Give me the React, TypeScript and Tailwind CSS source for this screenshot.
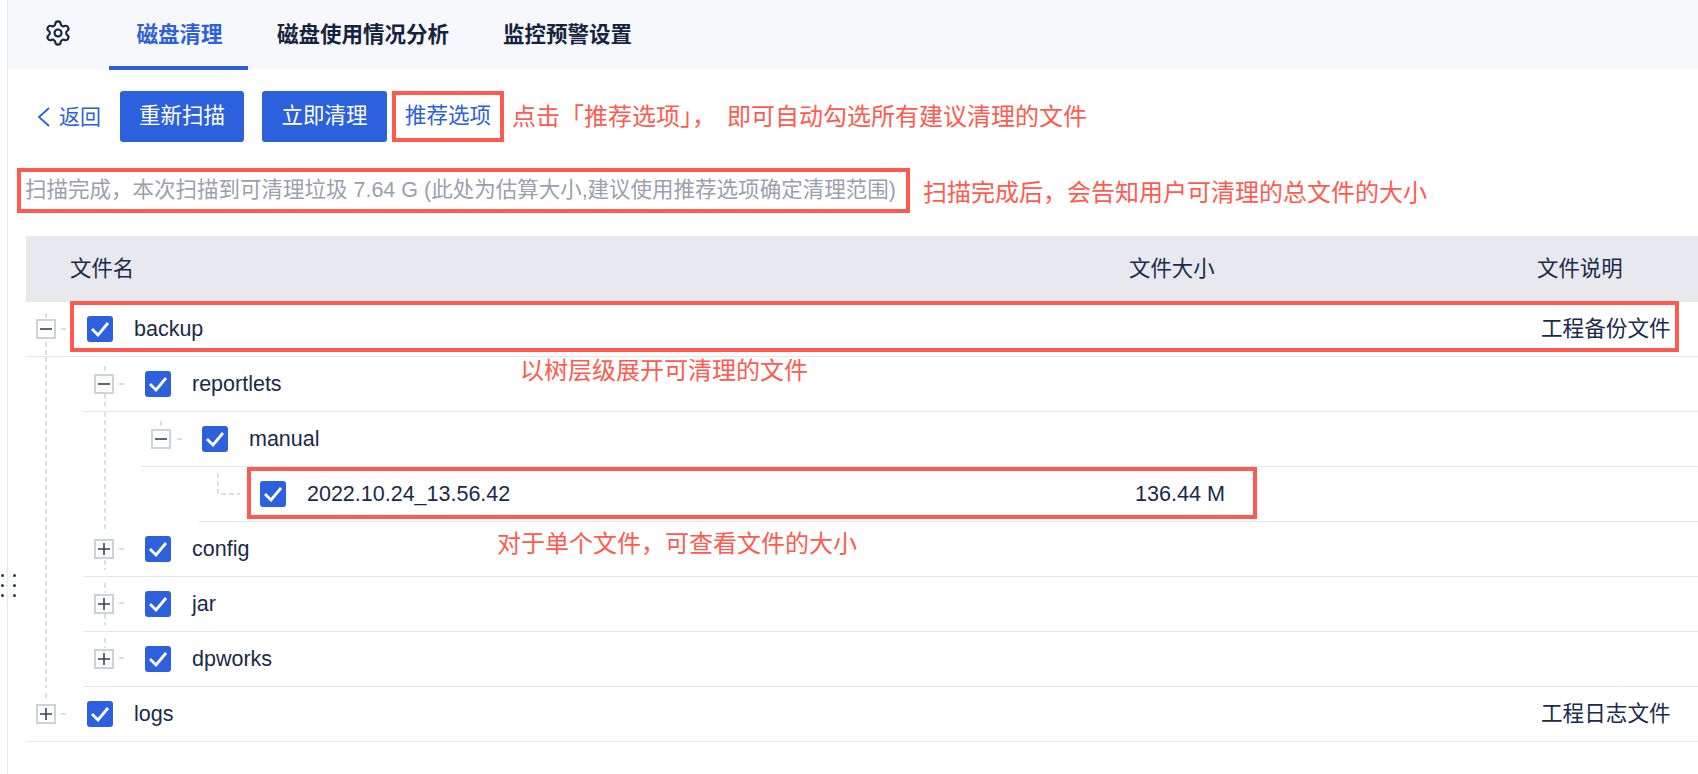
import { Settings } from "lucide-react";

type Row = {
  name: string;
  level: 0 | 1 | 2 | 3;
  icon: "minus" | "plus" | "none";
  size?: string;
  desc?: string;
};

const rows: Row[] = [
  { name: "backup", level: 0, icon: "minus", desc: "工程备份文件" },
  { name: "reportlets", level: 1, icon: "minus" },
  { name: "manual", level: 2, icon: "minus" },
  { name: "2022.10.24_13.56.42", level: 3, icon: "none", size: "136.44 M" },
  { name: "config", level: 1, icon: "plus" },
  { name: "jar", level: 1, icon: "plus" },
  { name: "dpworks", level: 1, icon: "plus" },
  { name: "logs", level: 0, icon: "plus", desc: "工程日志文件" },
];

const indent = {
  0: "ml-0",
  1: "ml-[58px]",
  2: "ml-[115px]",
  3: "ml-[173px]",
} as const;

function Expander({ type }: { type: "minus" | "plus" }) {
  return (
    <svg width="20" height="20" viewBox="0 0 20 20" className="shrink-0">
      <rect x="1" y="1" width="18" height="18" fill="#fff" stroke="#cdd2db" strokeWidth="2" />
      <path d={type === "minus" ? "M4 10H16" : "M4 10H16M10 4V16"} stroke="#33435e" strokeWidth="1.6" />
    </svg>
  );
}

function Check() {
  return (
    <span className="flex h-[26px] w-[26px] shrink-0 items-center justify-center rounded-[3px] bg-[#2c60dc]">
      <svg width="20" height="16" viewBox="0 0 20 16">
        <path d="M2 8L8 14L18 2" fill="none" stroke="#fff" strokeWidth="2.8" />
      </svg>
    </span>
  );
}

function TreeGuides() {
  const d = [
    "M46 11V21M46 40V55M46 55V386M46 391V399",
    "M61 27H67M119 82H125M177 137H183",
    "M105 64V71M105 92V104M105 110V227M105 258V268M105 281V291M105 312V323M105 336V346",
    "M119 247H125M119 301H125M119 356H125M61 412H67",
    "M161 119V126",
    "M218 171V192H240",
  ].join("");
  return (
    <svg
      width="260"
      height="440"
      viewBox="0 0 260 440"
      className="pointer-events-none absolute left-[-26px] top-0"
    >
      <path d={d} fill="none" stroke="#cfd2d8" strokeWidth="1.4" strokeDasharray="5 3" />
    </svg>
  );
}

function TreeRow({ row }: { row: Row }) {
  const sizeW = {
    0: "w-[1001px]",
    1: "w-[943px]",
    2: "w-[886px]",
    3: "w-[828px]",
  }[row.level];
  return (
    <div className={`relative flex h-[55px] items-center border-b border-[#e0e9f3] ${indent[row.level]}`}>
      <div className="ml-[10px] flex w-[20px] shrink-0 items-center">
        {row.icon !== "none" && <Expander type={row.icon} />}
      </div>
      <div className="ml-[31px] shrink-0">
        <Check />
      </div>
      <span className={`ml-[21px] shrink-0 text-[21.5px] text-[#1a2a49] ${sizeW}`}>{row.name}</span>
      <span className="w-[406px] shrink-0 text-[21.6px] text-[#1a2a49]">{row.size}</span>
      <span className="shrink-0 text-[21.6px] text-[#1a2a49]">{row.desc}</span>
    </div>
  );
}

export default function App() {
  return (
    <div className="relative h-[774px] w-[1698px] overflow-hidden bg-white font-['Liberation_Sans','Noto_Sans_CJK_SC',sans-serif]">
      <div className="ml-[7px] h-full border-l border-[#e6e8ec]">
        <nav className="flex h-[70px] items-center bg-[#f7f8fb]">
          <div className="ml-[36px] mt-[-5px] text-[#15233f]">
            <Settings size={28} strokeWidth={1.8} />
          </div>
          <div className="ml-[37px] flex h-full w-[139px] items-center justify-center border-b-[4px] border-[#2c60dc] pl-[2px] pt-[4px] text-[21.5px] font-semibold text-[#2c60dc]">
            磁盘清理
          </div>
          <div className="ml-[29px] text-[21.5px] font-semibold text-[#15233f]">磁盘使用情况分析</div>
          <div className="ml-[54px] text-[21.5px] font-semibold text-[#15233f]">监控预警设置</div>
        </nav>

        <div className="ml-[28px] mt-[21px] flex h-[51px] items-center">
          <svg width="16" height="24" viewBox="0 0 16 24" className="shrink-0">
            <path d="M13 3L3 12L13 21" fill="none" stroke="#2c60dc" strokeWidth="1.8" />
          </svg>
          <span className="ml-[7px] text-[21px] text-[#2c60dc]">返回</span>
          <button className="ml-[19px] h-[51px] w-[124px] rounded-[3px] bg-[#2c60dc] text-[21.5px] text-white">
            重新扫描
          </button>
          <button className="ml-[18px] h-[51px] w-[125px] rounded-[3px] bg-[#2c60dc] text-[21.5px] text-white">
            立即清理
          </button>
          <div className="ml-[5px] flex h-[51px] w-[112px] items-center justify-center border-[4px] border-[#ff5a4f] text-[21.5px] text-[#2c60dc]">
            推荐选项
          </div>
          <span className="ml-[8px] whitespace-nowrap text-[24px] text-[#ff5a4f]">点击「推荐选项」，</span>
          <span className="ml-[11px] whitespace-nowrap text-[24px] text-[#ff5a4f]">即可自动勾选所有建议清理的文件</span>
        </div>

        <div className="ml-[9px] mt-[26px] flex h-[45px] items-center">
          <div className="flex h-[45px] w-[893px] shrink-0 items-center whitespace-nowrap border-[4px] border-[#ff5a4f] pl-[4px] text-[21.5px] text-[#9aa0ad]">
            扫描完成，本次扫描到可清理垃圾 7.64 G (此处为估算大小,建议使用推荐选项确定清理范围)
          </div>
          <span className="ml-[13px] mt-[4px] whitespace-nowrap text-[24px] text-[#ff5a4f]">
            扫描完成后，会告知用户可清理的总文件的大小
          </span>
        </div>

        <div className="ml-[18px] mt-[23px]">
          <div className="flex h-[66px] items-center bg-[#e7e9ee] text-[21.4px] text-[#1a2a49]">
            <span className="ml-[44px] w-[1059px] shrink-0">文件名</span>
            <span className="w-[408px] shrink-0">文件大小</span>
            <span className="shrink-0">文件说明</span>
          </div>
          <div className="relative">
            <TreeGuides />
            {rows.map((r) => (
              <TreeRow key={r.name} row={r} />
            ))}
            <div className="pointer-events-none absolute left-[44px] top-[-1px] h-[51px] w-[1609px] border-[4px] border-[#ff5a4f]" />
            <div className="pointer-events-none absolute left-[221px] top-[165px] h-[52px] w-[1010px] border-[4px] border-[#ff5a4f]" />
            <span className="absolute left-[494px] top-[51px] whitespace-nowrap text-[24px] text-[#ff5a4f]">
              以树层级展开可清理的文件
            </span>
            <span className="absolute left-[471px] top-[224px] whitespace-nowrap text-[24px] text-[#ff5a4f]">
              对于单个文件，可查看文件的大小
            </span>
          </div>
        </div>
      </div>

      <div className="absolute left-[1px] top-[574px] grid grid-cols-2 gap-x-[9px] gap-y-[7px]">
        {[0, 1, 2, 3, 4, 5].map((i) => (
          <span key={i} className="h-[3px] w-[3px] rounded-full bg-[#2a3550]" />
        ))}
      </div>
    </div>
  );
}
